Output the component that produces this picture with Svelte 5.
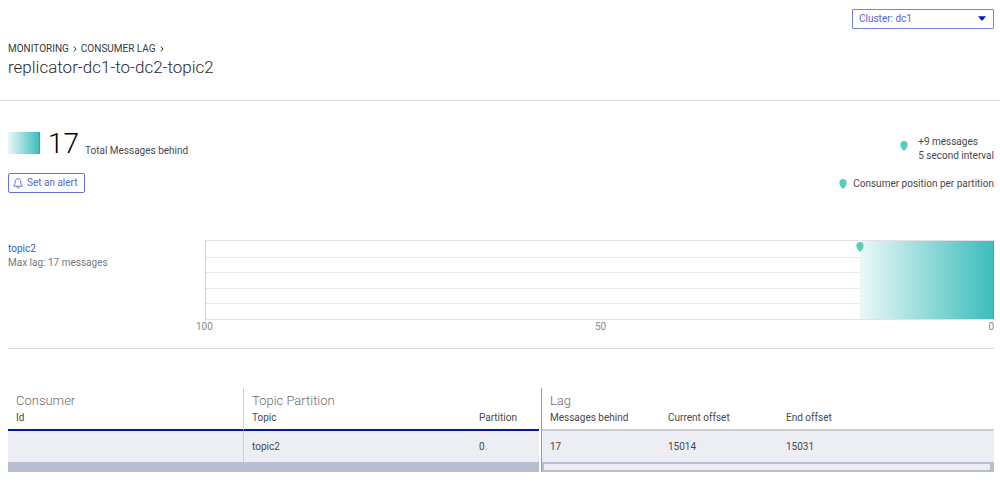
<script lang="ts">
  interface Lag {
    topic: string;
    partition: number;
    behind: number;
    current: number;
    end: number;
  }

  const group = "replicator-dc1-to-dc2-topic2";
  const clusters = ["dc1", "dc2"];
  const scale = 100;

  let cluster = $state("dc1");
  let rows = $state<Lag[]>([
    { topic: "topic2", partition: 0, behind: 17, current: 15014, end: 15031 },
  ]);

  let total = $derived(rows.reduce((sum, r) => sum + r.behind, 0));
</script>

{#snippet pin()}
  <svg class="pin" viewBox="0 0 8 10" aria-hidden="true">
    <path d="M4 0C1.7 0 .3 1.6 .3 3.7 .3 6.2 2.4 8.4 4 10 5.6 8.4 7.7 6.2 7.7 3.7 7.7 1.6 6.3 0 4 0Z" />
  </svg>
{/snippet}

{#snippet chevron()}
  <svg class="chevron" viewBox="0 0 4 6" aria-hidden="true">
    <path d="M.8 .5 3 3 .8 5.5" />
  </svg>
{/snippet}

<header>
  <div class="cluster">
    <select bind:value={cluster} aria-label="Cluster">
      {#each clusters as name (name)}
        <option value={name}>Cluster: {name}</option>
      {/each}
    </select>
    <svg viewBox="0 0 8 5" aria-hidden="true"><path d="M0 .3H8L4.6 4.6H3.4Z" /></svg>
  </div>
  <nav class="breadcrumbs">
    <a href="#monitoring">MONITORING</a>
    {@render chevron()}
    <a href="#consumer-lag">CONSUMER LAG</a>
    {@render chevron()}
  </nav>
  <h1>{group}</h1>
</header>

<main>
  <section class="summary">
    <div>
      <div class="total">
        <span class="swatch"></span>
        <span class="count">{total}</span>
        <span>Total Messages behind</span>
      </div>
      <button class="alert">
        <svg viewBox="0 0 10 11" aria-hidden="true">
          <path d="M5 .7C3 .7 2.2 2.2 2.2 3.8 2.2 6 1.7 6.8 .7 8.2H9.3C8.3 6.8 7.8 6 7.8 3.8 7.8 2.2 7 .7 5 .7ZM3.7 8.4C3.7 10.6 6.3 10.6 6.3 8.4" />
        </svg>
        Set an alert
      </button>
    </div>
    <div class="legend">
      <div class="legend-item rate">
        {@render pin()}
        <span>+9 messages<br />5 second interval</span>
      </div>
      <div class="legend-item">
        {@render pin()}
        <span>Consumer position per partition</span>
      </div>
    </div>
  </section>

  <section class="topic">
    <div class="topic-name">
      <a href="#topic2">topic2</a>
      <span>Max lag: {total} messages</span>
    </div>
    <div>
      <div class="chart">
        {#each Array(5) as _}
          <div class="gridline"></div>
        {/each}
        <div class="lag-bar" style:width="{(total / scale) * 100}%">
          {@render pin()}
        </div>
      </div>
      <div class="axis">
        <span>{scale}</span>
        <span>{scale / 2}</span>
        <span>0</span>
      </div>
    </div>
  </section>

  <section class="tables">
    <div>
      <table class="pinned">
        <colgroup>
          <col class="col-consumer" />
          <col />
          <col class="col-partition" />
        </colgroup>
        <thead>
          <tr class="groups">
            <th>Consumer</th>
            <th class="divide" colspan="2">Topic Partition</th>
          </tr>
          <tr class="fields">
            <th>Id</th>
            <th class="divide">Topic</th>
            <th>Partition</th>
          </tr>
        </thead>
        <tbody>
          {#each rows as row (row.topic + row.partition)}
            <tr>
              <td></td>
              <td class="divide">{row.topic}</td>
              <td>{row.partition}</td>
            </tr>
          {/each}
        </tbody>
      </table>
      <div class="track"></div>
    </div>
    <div class="scrolling">
      <table>
        <colgroup>
          <col class="col-lag" />
          <col class="col-lag" />
          <col />
        </colgroup>
        <thead>
          <tr class="groups">
            <th colspan="3">Lag</th>
          </tr>
          <tr class="fields">
            <th>Messages behind</th>
            <th>Current offset</th>
            <th>End offset</th>
          </tr>
        </thead>
        <tbody>
          {#each rows as row (row.topic + row.partition)}
            <tr>
              <td>{row.behind}</td>
              <td>{row.current}</td>
              <td>{row.end}</td>
            </tr>
          {/each}
        </tbody>
      </table>
      <div class="track"><div class="thumb"></div></div>
    </div>
  </section>
</main>

<style>
  :global(body) {
    background: #fff;
    color: #48484b;
    font-family: Roboto, "Liberation Sans", sans-serif;
    font-size: 10px;
    line-height: 14px;
  }
  a {
    color: inherit;
    text-decoration: none;
  }
  header {
    padding: 9px 6px 22px 8px;
    border-bottom: 1px solid #dfdfdf;
  }
  .cluster {
    position: relative;
    width: 142px;
    margin-left: auto;
  }
  .cluster select {
    display: block;
    width: 100%;
    height: 20px;
    box-sizing: border-box;
    padding: 0 6px;
    appearance: none;
    background: #fff;
    border: 1px solid #7382d2;
    border-radius: 1px;
    color: #5568cd;
    font: inherit;
  }
  .cluster svg {
    position: absolute;
    top: 7px;
    right: 8px;
    width: 8px;
    height: 5px;
    fill: #0a18b0;
    pointer-events: none;
  }
  .breadcrumbs {
    display: flex;
    align-items: center;
    gap: 4px;
    margin-top: 13px;
    color: #38383a;
  }
  .chevron {
    width: 4px;
    height: 6px;
    fill: none;
    stroke: #2b2b2d;
  }
  h1 {
    margin: 0;
    color: #2b2b2d;
    font-size: 17px;
    font-weight: 300;
    line-height: 22px;
  }
  main {
    padding: 29px 6px 12px 8px;
  }
  .summary {
    display: flex;
    justify-content: space-between;
  }
  .total {
    display: flex;
    align-items: flex-end;
    height: 28px;
  }
  .swatch {
    width: 32px;
    height: 22px;
    box-sizing: border-box;
    margin: 0 8px 4px 0;
    background: linear-gradient(90deg, #ebf8f8, #3cbdbb);
    border-right: 1px solid #12b5b3;
  }
  .count {
    width: 37px;
    color: #000;
    font-size: 28px;
    font-weight: 300;
    line-height: 28px;
  }
  .alert {
    display: flex;
    align-items: center;
    gap: 4px;
    height: 20px;
    margin-top: 15px;
    padding: 0 6px 0 4px;
    background: #fff;
    border: 1px solid #6273d0;
    border-radius: 2px;
    color: #5568cd;
    font: inherit;
    cursor: pointer;
  }
  .alert svg {
    width: 10px;
    height: 11px;
    fill: none;
    stroke: #4459c8;
    stroke-width: 0.8;
  }
  .legend {
    display: flex;
    flex-direction: column;
    align-items: flex-end;
    gap: 14px;
    padding-top: 5px;
  }
  .legend-item {
    display: flex;
    align-items: center;
    gap: 6px;
  }
  .rate {
    align-items: flex-start;
    gap: 10px;
  }
  .rate .pin {
    margin-top: 6px;
  }
  .pin {
    display: block;
    width: 8px;
    height: 10px;
    fill: #58cdb8;
  }
  .topic {
    display: grid;
    grid-template-columns: 197px 1fr;
    margin-top: 47px;
    padding-bottom: 14px;
    border-bottom: 1px solid #dcdcdc;
  }
  .topic-name {
    display: flex;
    flex-direction: column;
    padding-top: 2px;
    color: #77777a;
  }
  .topic-name a {
    color: #3a58d0;
  }
  .chart {
    position: relative;
    display: grid;
    grid-template-rows: repeat(5, 1fr);
    height: 80px;
    box-sizing: border-box;
    border: 1px solid #e2e2e4;
    border-left-color: #d0d0d2;
    border-right: none;
  }
  .gridline + .gridline {
    border-top: 1px solid #e8e8ea;
  }
  .lag-bar {
    position: absolute;
    top: 0;
    right: 0;
    bottom: 0;
    box-sizing: border-box;
    background: linear-gradient(90deg, #ebf8f8, #3cbdbb);
    border-right: 1px solid #12b5b3;
  }
  .lag-bar .pin {
    position: absolute;
    top: 1px;
    left: -4px;
  }
  .axis {
    display: flex;
    justify-content: space-between;
    margin-left: -9px;
    color: #88888b;
  }
  .tables {
    display: grid;
    grid-template-columns: 531fr 453fr;
    gap: 2px;
    margin-top: 39px;
  }
  table {
    width: 100%;
    table-layout: fixed;
    border-collapse: separate;
    border-spacing: 0;
  }
  .col-consumer {
    width: 235px;
  }
  .col-partition {
    width: 68px;
  }
  .col-lag {
    width: 118px;
  }
  th,
  td {
    box-sizing: border-box;
    padding: 0 8px;
    font-weight: 400;
    text-align: left;
  }
  .groups th {
    height: 22px;
    padding-top: 4px;
    color: #6b6b6e;
    font-size: 13px;
    font-weight: 300;
    line-height: 18px;
  }
  .fields th {
    height: 21px;
    padding-bottom: 4px;
    border-bottom: 2px solid #cfcfd1;
  }
  .pinned .fields th {
    border-bottom-color: #0714a8;
  }
  td {
    height: 31px;
    background: #edeef4;
  }
  .divide {
    border-left: 1px solid #d0d0d2;
  }
  .scrolling {
    border-left: 1px solid #9c9ca0;
  }
  .track {
    height: 10px;
    box-sizing: border-box;
    padding: 2px 4px 2px 2px;
    background: #b9bdd0;
  }
  .thumb {
    height: 6px;
    background: #edeef4;
    border-radius: 1px;
  }
</style>
